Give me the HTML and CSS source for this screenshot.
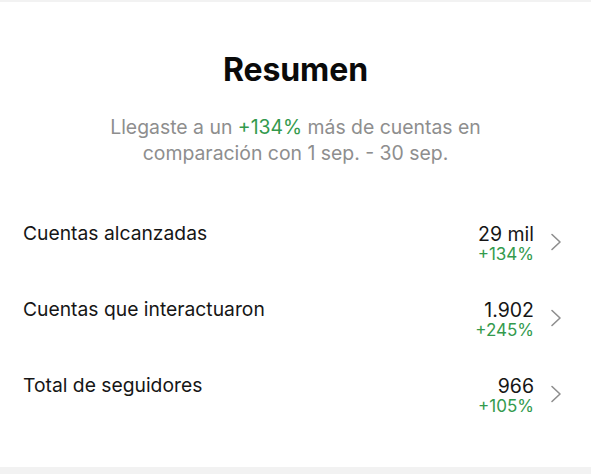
FILE: index.html
```html
<!DOCTYPE html>
<html lang="es">
<head>
<meta charset="utf-8">
<link rel="stylesheet" href="styles.css">
</head>
<body>
<div class="topbar"></div>
<main class="card">
  <h1 class="title">Resumen</h1>
  <p class="subtitle">Llegaste a un <span class="green">+134%</span> más de cuentas en<br>comparación con 1 sep. - 30 sep.</p>
  <ul class="rows">
    <li class="row">
      <span class="label">Cuentas alcanzadas</span>
      <span class="values"><span class="value">29 mil</span><span class="delta">+134%</span></span>
      <svg class="chev" width="12" height="18" viewBox="0 0 12 18"><path d="M2 1.5 L10 9 L2 16.5" fill="none" stroke="#8e8e8e" stroke-width="1.6" stroke-linecap="round" stroke-linejoin="round"/></svg>
    </li>
    <li class="row">
      <span class="label">Cuentas que interactuaron</span>
      <span class="values"><span class="value">1.902</span><span class="delta">+245%</span></span>
      <svg class="chev" width="12" height="18" viewBox="0 0 12 18"><path d="M2 1.5 L10 9 L2 16.5" fill="none" stroke="#8e8e8e" stroke-width="1.6" stroke-linecap="round" stroke-linejoin="round"/></svg>
    </li>
    <li class="row">
      <span class="label">Total de seguidores</span>
      <span class="values"><span class="value">966</span><span class="delta">+105%</span></span>
      <svg class="chev" width="12" height="18" viewBox="0 0 12 18"><path d="M2 1.5 L10 9 L2 16.5" fill="none" stroke="#8e8e8e" stroke-width="1.6" stroke-linecap="round" stroke-linejoin="round"/></svg>
    </li>
  </ul>
</main>
<div class="bottombar"></div>
</body>
</html>
```
FILE: styles.css
```css
* { box-sizing: border-box; }
html, body { margin: 0; padding: 0; background: #fff; }
body {
  width: 591px;
  height: 474px;
  overflow: hidden;
  font-family: Inter, "Noto Sans", sans-serif;
  color: #111;
  display: flex;
  flex-direction: column;
}
.topbar { height: 2px; background: #f2f2f2; flex: none; }
.bottombar { height: 7px; background: #f2f2f2; flex: none; margin-top: auto; }
.card { flex: 1; display: flex; flex-direction: column; }
.title {
  margin: 46px 0 0;
  text-align: center;
  font-size: 32px;
  font-weight: 700;
  line-height: 44px;
  letter-spacing: -0.1px;
  color: #0a0a0a;
}
.subtitle {
  margin: 22px 0 0;
  text-align: center;
  font-size: 19.4px;
  line-height: 26px;
  color: #8e8e8e;
}
.green { color: #339a4d; }
.rows { list-style: none; margin: 55px 0 0; padding: 0; display: flex; flex-direction: column; gap: 26px; }
.row {
  display: flex;
  align-items: flex-start;
  padding: 0 29px 0 23px;
  height: 50px;
}
.label { flex: 1; font-size: 19.3px; line-height: 24px; color: #161616; }
.values { display: flex; flex-direction: column; align-items: flex-end; padding-top: 2px; }
.value { font-size: 19.5px; line-height: 22px; color: #161616; }
.delta { font-size: 17px; line-height: 19px; color: #339a4d; }
.chev { margin: 12px 0 0 16px; flex: none; }
```
